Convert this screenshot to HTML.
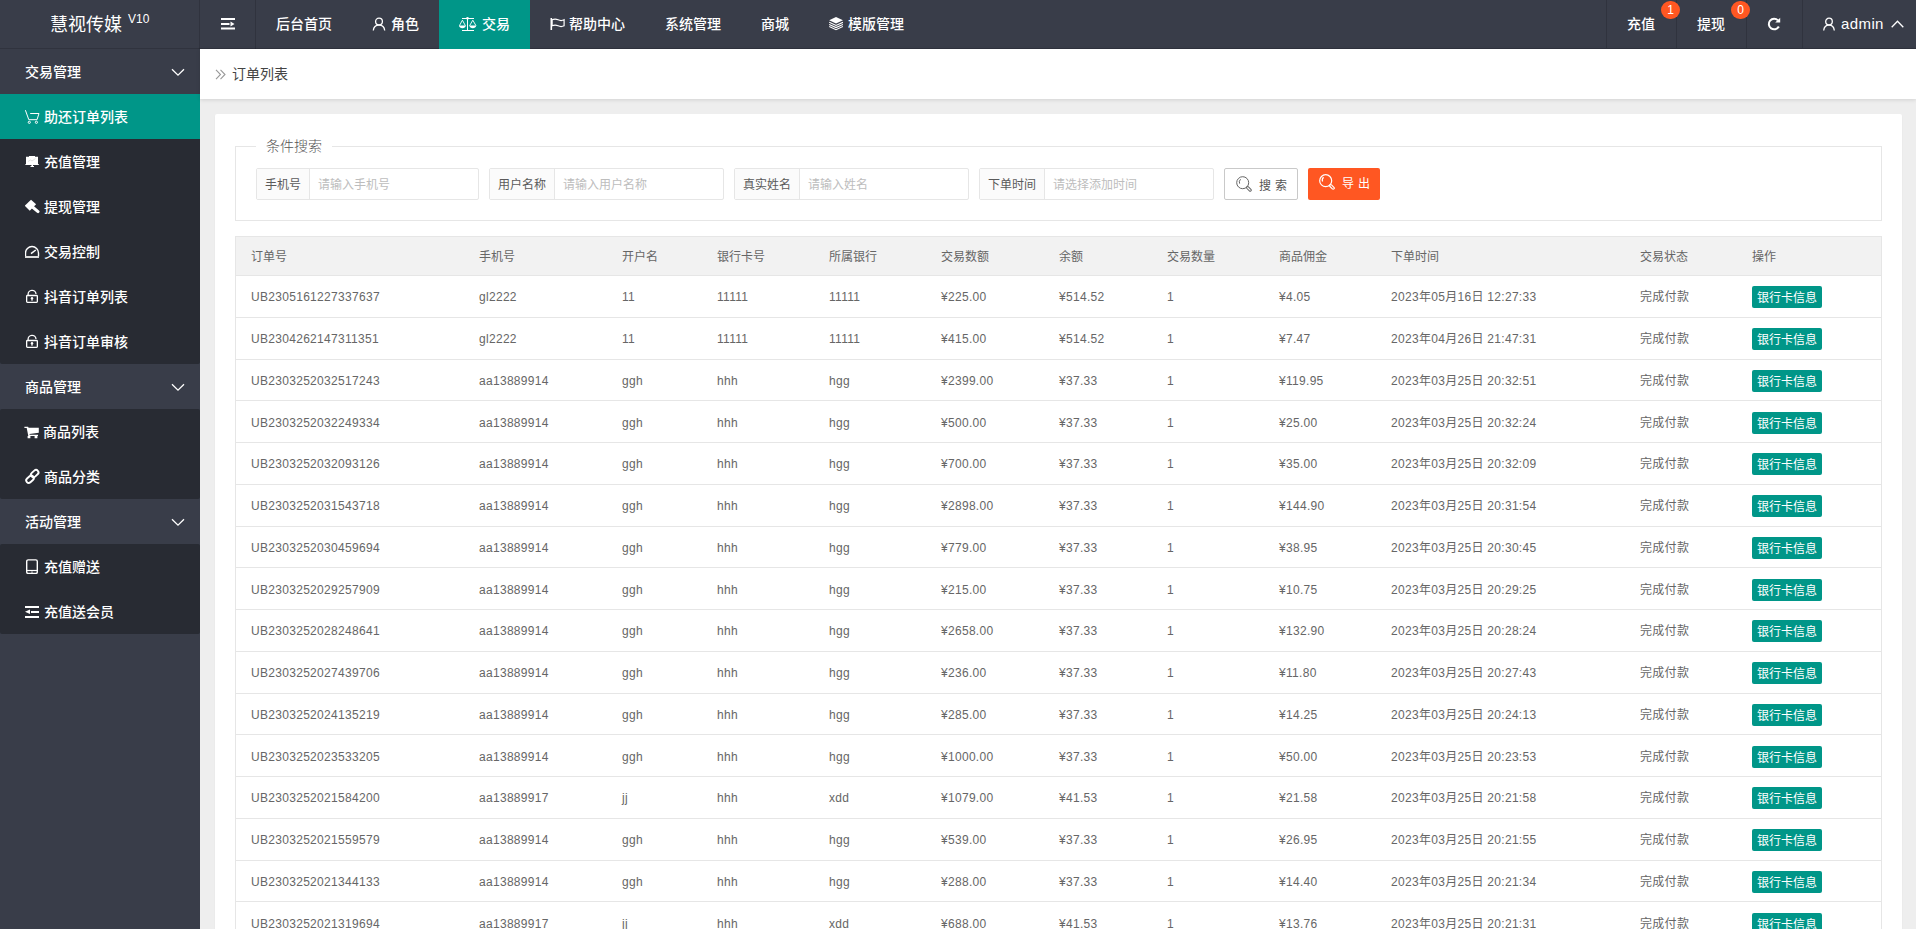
<!DOCTYPE html>
<html lang="zh-CN">
<head>
<meta charset="utf-8">
<title>订单列表</title>
<style>
*{box-sizing:border-box;margin:0;padding:0}
html,body{width:1916px;height:929px;overflow:hidden}
body{background:#eeeeee;font-family:"Liberation Sans","Noto Sans CJK SC",sans-serif;font-size:14px;color:#333;position:relative}
ul{list-style:none}
svg{display:block}
/* header */
.hd{position:absolute;left:0;top:0;width:1916px;height:49px;background:#393D49;color:#fff;font-weight:500}
.hd:after{content:"";position:absolute;left:0;top:48px;width:1916px;height:1px;background:rgba(0,0,0,.15)}
.logo{position:absolute;left:0;top:0;width:200px;height:49px;border-right:1px solid rgba(0,0,0,.15);line-height:50px;overflow:hidden;font-size:18px;font-weight:400;color:#fff;padding-left:50px;white-space:nowrap}
.logo sup{font-size:12px;position:relative;top:-1px;margin-left:1px;vertical-align:super;line-height:0}
.flex{position:absolute;left:200px;top:0;width:56px;height:49px;border-right:1px solid rgba(0,0,0,.15)}
.flex svg{position:absolute;left:21px;top:17px}
.nav{position:absolute;top:0;height:48px;display:flex;z-index:1}
.nav.l{left:256px}
.nav.r{right:0}
.nav li{position:relative;height:48px;line-height:48px;padding:0 20px;font-size:14px;color:#fff;white-space:nowrap;display:flex;align-items:center}
.nav li.on{background:#009688;height:49px;padding-bottom:1px}
.nav li svg{margin-right:5px;flex:none}
.nav.r li{border-left:1px solid rgba(0,0,0,.15)}
.badge{position:absolute;top:1px;right:-4px;min-width:19px;height:18px;line-height:18px;border-radius:9px;background:#FF5722;color:#fff;font-size:12px;text-align:center;z-index:2}
/* side */
.side{position:absolute;left:0;top:49px;width:200px;height:880px;background:#393D49;color:#fff;font-weight:500}
.side .g{height:45px;line-height:47px;overflow:hidden;padding-left:25px;position:relative;font-size:14px}
.side .g svg{position:absolute;right:15px;top:19px}
.side .sub{background:#282B33;border-radius:2px}
.side .it{height:45px;line-height:47px;overflow:hidden;padding-left:44px;position:relative;font-size:14px;white-space:nowrap}
.side .it svg{position:absolute;left:25px;top:15px}
.side .it.on{background:#009688}
/* body */
.crumb{position:absolute;left:200px;top:49px;width:1716px;height:50px;background:#fff;box-shadow:0 1px 4px rgba(0,0,0,.12);line-height:50px;padding-left:32px;font-size:14px;color:#444}
.crumb svg{position:absolute;left:15px;top:20px}
.card{position:absolute;left:215px;top:114px;width:1687px;height:900px;background:#fff;border-radius:2px;box-shadow:0 1px 2px 0 rgba(0,0,0,.05)}
.fs{position:absolute;left:20px;top:32px;width:1647px;height:75px;border:1px solid #e6e6e6}
.fs .lg{position:absolute;left:20px;top:-11px;padding:0 10px;background:#fff;font-size:14px;line-height:20px;color:#555;font-weight:300}
.grp{position:absolute;top:21px;height:32px;border:1px solid #e6e6e6;border-radius:2px;display:flex;font-size:12px;background:#fff}
.grp .lb{height:30px;line-height:32px;overflow:hidden;background:#FBFBFB;border-right:1px solid #e6e6e6;text-align:center;color:#5a5a5a}
.grp .ip{height:30px;line-height:32px;overflow:hidden;padding-left:8px;color:#bdbdbd;width:168px}
.btn{position:absolute;top:21px;height:32px;border-radius:2px;font-size:12px;white-space:pre}
.btn svg{position:absolute}
.btn span{position:absolute;line-height:20px;word-spacing:.7px}
.btn.s{border:1px solid #C9C9C9;background:#fff;color:#555}
.btn.e{background:#FF5722;color:#fff}
/* table */
.tbl{position:absolute;left:20px;top:122px;width:1647px;border:1px solid #e6e6e6;border-bottom:0;font-size:12px;color:#666;letter-spacing:.3px}
.tr{display:flex;height:41.75px;border-bottom:1px solid #e6e6e6}
.tr.th{height:39px;background:#f2f2f2;letter-spacing:0}
.td{padding-left:15px;padding-top:2px;line-height:20px;display:flex;align-items:center;white-space:nowrap;flex:none}
.tr.th .td{height:38px;padding-top:2px}
.xbtn{display:inline-block;height:22px;line-height:25px;overflow:hidden;padding:0 5px;background:#009688;color:#fff;border-radius:2px;font-size:12px;letter-spacing:0;position:relative;top:0}

</style>
</head>
<body>
<div class="hd">
  <div class="logo">慧视传媒 <sup>V10</sup></div>
  <div class="flex"><svg width="14" height="14" viewBox="0 0 14 14"><path fill="#fff" d="M0 1h14v2H0zM0 6h8.5v2H0zM0 10.5h14v2H0zM9.5 4.5l4 2.5-4 2.5z"/></svg></div>
  <ul class="nav l">
    <li>后台首页</li>
    <li><svg width="14" height="14" viewBox="0 0 14 14"><g fill="none" stroke="#fff" stroke-width="1.3"><circle cx="7" cy="4.5" r="3.4"/><path d="M1.3 13.5c.3-3.2 2.6-5.4 5.7-5.4s5.400 2.200 5.700 5.400"/></g></svg>角色</li>
    <li class="on"><svg width="18" height="14" viewBox="0 0 18 14"><g fill="none" stroke="#fff" stroke-width="1"><path d="M3 1.500h12M8.500 1.500v12M3 13.500h12"/><path d="M3.400 3.200L.4 8.700M3.400 3.200l3 5.500M13.800 3.200l-3.200 5.500M13.800 3.200l3.200 5.500" stroke-width=".9"/></g><circle cx="8.500" cy="1.300" r="1.300" fill="#fff"/><path fill="#fff" d="M0 8.500h6.800c-.2 1.800-1.600 2.700-3.400 2.700S.2 10.300 0 8.500zM10.400 8.500h6.800c-.2 1.800-1.600 2.700-3.400 2.700s-3.200-.9-3.400-2.700z"/></svg>交易</li>
    <li><svg width="15" height="14" viewBox="0 0 15 14" style="margin-right:4px"><g fill="none" stroke="#fff"><path stroke-width="1.600" d="M1.300 1v12"/><path stroke-width="1.200" d="M2.100 2.800c2-1 4-1 6 0s4 1 6 0v6c-2 1-4 1-6 0s-4-1-6 0z"/></g></svg>帮助中心</li>
    <li>系统管理</li>
    <li>商城</li>
    <li><svg width="14" height="14" viewBox="0 0 14 14"><path fill="#fff" d="M7 0L.2 3.300 7 6.500l7-3.200z"/><path fill="none" stroke="#fff" stroke-width="1.100" d="M.2 5.300L7 8.500l7-3.200M.2 7.400L7 10.600l7-3.200M.2 9.500L7 12.700l7-3.200"/></svg>模版管理</li>
  </ul>
  <ul class="nav r">
    <li style="width:70px">充值<span class="badge">1</span></li>
    <li style="width:70px">提现<span class="badge">0</span></li>
    <li style="width:56px"><svg width="14" height="14" viewBox="0 0 14 14"><path fill="none" stroke="#fff" stroke-width="2" d="M11.800 9.500A5.300 5.300 0 1 1 11 3.400"/><path fill="#fff" d="M8.200 5.600L13.200.8v4.800z"/></svg></li>
    <li style="width:114px"><svg width="12" height="14" viewBox="0 0 12 14" style="margin-right:6px"><g fill="none" stroke="#fff" stroke-width="1.300"><circle cx="6" cy="4.500" r="3.300"/><path d="M.7 13.500c.3-3.200 2.400-5.400 5.300-5.400s5 2.200 5.300 5.400"/></g></svg><span style="font-size:15px;letter-spacing:.4px">admin</span><svg width="13" height="8" viewBox="0 0 13 8" style="margin-left:7px;margin-right:0"><path fill="none" stroke="#fff" stroke-width="1.300" d="M.7 7.300L6.500 1.300l5.800 6"/></svg></li>
  </ul>
</div>
<div class="side">
  <div class="g">交易管理<svg width="14" height="9" viewBox="0 0 14 9"><path fill="none" stroke="#fff" stroke-width="1.300" d="M1 1.200l6 6 6-6"/></svg></div>
  <div class="sub">
    <div class="it on"><svg width="15" height="15" viewBox="0 0 15 15"><g fill="none" stroke="#fff" stroke-width="1"><path d="M.4 1.200l3.400 9.500H12l2-6.200H5.200"/><circle cx="4.300" cy="13.300" r="1.100"/><circle cx="11.400" cy="13.300" r="1.100"/></g></svg>助还订单列表</div>
    <div class="it"><svg width="15" height="15" viewBox="0 0 15 15"><path fill="#fff" d="M4 2h6v.8h3v7.400h1v.9H.2v-.9H1V2.800h3zM6.500 11.100h1.500v.9H9v1H5.500v-1h1z"/><path fill="none" stroke="#ccc" stroke-width=".6" d="M3 7.500l2.500-1.500 1.500 1 3.500-2.500"/></svg>充值管理</div>
    <div class="it"><svg width="15" height="15" viewBox="0 0 15 15"><path fill="#fff" d="M6 .8l5.100 4.500-6.350 6.500L-.2 6.700z"/><path stroke="#fff" stroke-width="3" stroke-linecap="round" d="M7.500 8l5.500 4.600"/></svg>提现管理</div>
    <div class="it"><svg width="15" height="15" viewBox="0 0 15 15"><path fill="none" stroke="#fff" stroke-width="1.400" d="M.5 12.500V9a6.500 6.500 0 0 1 13 0v3.500"/><path fill="#ddd" d="M0 12h14v2H0z"/><path stroke="#fff" stroke-width="1.500" d="M6 9.700L10.800 6"/></svg>交易控制</div>
    <div class="it"><svg width="15" height="15" viewBox="0 0 15 15"><g fill="none" stroke="#fff" stroke-width="1.300"><rect x="1.650" y="6.500" width="10.700" height="6.900" rx=".8"/><path d="M3.100 6.500V5.500a3.950 3.950 0 0 1 7.900-.5"/></g><circle cx="7" cy="9.300" r="1.200" fill="#fff"/><path stroke="#fff" stroke-width="1.200" d="M7 9.300v2.500"/></svg>抖音订单列表</div>
    <div class="it"><svg width="15" height="15" viewBox="0 0 15 15"><g fill="none" stroke="#fff" stroke-width="1.300"><rect x="1.650" y="6.500" width="10.700" height="6.900" rx=".8"/><path d="M3.100 6.500V5.500a3.950 3.950 0 0 1 7.900-.5"/></g><circle cx="7" cy="9.300" r="1.200" fill="#fff"/><path stroke="#fff" stroke-width="1.200" d="M7 9.300v2.500"/></svg>抖音订单审核</div>
  </div>
  <div class="g">商品管理<svg width="14" height="9" viewBox="0 0 14 9"><path fill="none" stroke="#fff" stroke-width="1.300" d="M1 1.200l6 6 6-6"/></svg></div>
  <div class="sub">
    <div class="it" style="padding-left:43px"><svg width="15" height="15" viewBox="0 0 15 15" style="overflow:visible"><path fill="#fff" d="M-.6 2.800h3.700l.5 1h10.200v5l-9.300 1.100.2.900h8.300v1.200H3.300L1.700 4H-.6z"/><path fill="#fff" d="M2.600 12h2.800v2.200H2.600zM9.600 12h2.800v2.200H9.600z"/></svg>商品列表</div>
    <div class="it"><svg width="15" height="15" viewBox="0 0 15 15" style="overflow:visible"><g fill="none" stroke="#fff" stroke-width="1.900"><rect x="-4.200" y="-2.500" width="8.400" height="5" rx="2.500" transform="translate(9.700 4.600) rotate(-42)"/><rect x="-4.200" y="-2.500" width="8.400" height="5" rx="2.500" transform="translate(5 10.300) rotate(-42)"/></g></svg>商品分类</div>
  </div>
  <div class="g">活动管理<svg width="14" height="9" viewBox="0 0 14 9"><path fill="none" stroke="#fff" stroke-width="1.300" d="M1 1.200l6 6 6-6"/></svg></div>
  <div class="sub">
    <div class="it"><svg width="15" height="15" viewBox="0 0 15 15"><rect x="1.700" y=".9" width="10.600" height="13.500" rx="1.500" fill="none" stroke="#fff" stroke-width="1.400"/><path fill="#fff" d="M1.700 10.900h10.600v1.200H1.700z"/><rect x="6.300" y="12.600" width="1.400" height="1" fill="#fff"/></svg>充值赠送</div>
    <div class="it"><svg width="15" height="15" viewBox="0 0 15 15"><path fill="#fff" d="M0 2h14v2H0zM6 7h8v2H6zM0 12h14v2H0zM0 7.800L5 5.500V10z"/></svg>充值送会员</div>
  </div>
</div>
<div class="crumb"><svg width="11" height="11" viewBox="0 0 11 11"><path fill="none" stroke="#999" stroke-width="1.100" d="M1 .8l4.500 4.700L1 10.200M5.500.8L10 5.500l-4.500 4.700"/></svg>订单列表</div>
<div class="card">
  <div class="fs">
    <div class="lg">条件搜索</div>
    <div class="grp" style="left:20px;width:223px"><div class="lb" style="width:53px">手机号</div><div class="ip">请输入手机号</div></div>
    <div class="grp" style="left:253px;width:235px"><div class="lb" style="width:65px">用户名称</div><div class="ip">请输入用户名称</div></div>
    <div class="grp" style="left:498px;width:235px"><div class="lb" style="width:65px">真实姓名</div><div class="ip">请输入姓名</div></div>
    <div class="grp" style="left:743px;width:235px"><div class="lb" style="width:65px">下单时间</div><div class="ip">请选择添加时间</div></div>
    <div class="btn s" style="left:988px;width:74px"><svg width="16" height="16" viewBox="0 0 16 16" style="left:11px;top:7px"><g fill="none" stroke="#666" stroke-width="1"><circle cx="6.700" cy="6.700" r="6"/><path d="M4.600 3.300a3.800 3.800 0 0 0-1 4.300"/><rect x="-1.100" y="0" width="2.200" height="5.600" rx="1.100" transform="translate(10.950 10.950) rotate(-45)"/></g></svg><span style="left:34px;top:7px">搜 索</span></div>
    <div class="btn e" style="left:1072px;width:72px"><svg width="16" height="16" viewBox="0 0 16 16" style="left:11px;top:6px"><g fill="none" stroke="#fff" stroke-width="1.200"><circle cx="6.700" cy="6.700" r="6"/><path d="M4.600 3.300a3.800 3.800 0 0 0-1 4.300"/><rect x="-1.100" y="0" width="2.200" height="5.600" rx="1.100" transform="translate(10.950 10.950) rotate(-45)"/></g></svg><span style="left:34px;top:6px">导 出</span></div>
  </div>
<div class="tbl">
<div class="tr th"><div class="td" style="width:228px">订单号</div><div class="td" style="width:143px">手机号</div><div class="td" style="width:95px">开户名</div><div class="td" style="width:112px">银行卡号</div><div class="td" style="width:112px">所属银行</div><div class="td" style="width:118px">交易数额</div><div class="td" style="width:108px">余额</div><div class="td" style="width:112px">交易数量</div><div class="td" style="width:112px">商品佣金</div><div class="td" style="width:249px">下单时间</div><div class="td" style="width:112px">交易状态</div><div class="td" style="width:144px">操作</div></div>
<div class="tr"><div class="td" style="width:228px">UB2305161227337637</div><div class="td" style="width:143px">gl2222</div><div class="td" style="width:95px">11</div><div class="td" style="width:112px">11111</div><div class="td" style="width:112px">11111</div><div class="td" style="width:118px">¥225.00</div><div class="td" style="width:108px">¥514.52</div><div class="td" style="width:112px">1</div><div class="td" style="width:112px">¥4.05</div><div class="td c" style="width:249px">2023年05月16日 12:27:33</div><div class="td c" style="width:112px">完成付款</div><div class="td" style="width:144px"><span class="xbtn">银行卡信息</span></div></div>
<div class="tr"><div class="td" style="width:228px">UB2304262147311351</div><div class="td" style="width:143px">gl2222</div><div class="td" style="width:95px">11</div><div class="td" style="width:112px">11111</div><div class="td" style="width:112px">11111</div><div class="td" style="width:118px">¥415.00</div><div class="td" style="width:108px">¥514.52</div><div class="td" style="width:112px">1</div><div class="td" style="width:112px">¥7.47</div><div class="td c" style="width:249px">2023年04月26日 21:47:31</div><div class="td c" style="width:112px">完成付款</div><div class="td" style="width:144px"><span class="xbtn">银行卡信息</span></div></div>
<div class="tr"><div class="td" style="width:228px">UB2303252032517243</div><div class="td" style="width:143px">aa13889914</div><div class="td" style="width:95px">ggh</div><div class="td" style="width:112px">hhh</div><div class="td" style="width:112px">hgg</div><div class="td" style="width:118px">¥2399.00</div><div class="td" style="width:108px">¥37.33</div><div class="td" style="width:112px">1</div><div class="td" style="width:112px">¥119.95</div><div class="td c" style="width:249px">2023年03月25日 20:32:51</div><div class="td c" style="width:112px">完成付款</div><div class="td" style="width:144px"><span class="xbtn">银行卡信息</span></div></div>
<div class="tr"><div class="td" style="width:228px">UB2303252032249334</div><div class="td" style="width:143px">aa13889914</div><div class="td" style="width:95px">ggh</div><div class="td" style="width:112px">hhh</div><div class="td" style="width:112px">hgg</div><div class="td" style="width:118px">¥500.00</div><div class="td" style="width:108px">¥37.33</div><div class="td" style="width:112px">1</div><div class="td" style="width:112px">¥25.00</div><div class="td c" style="width:249px">2023年03月25日 20:32:24</div><div class="td c" style="width:112px">完成付款</div><div class="td" style="width:144px"><span class="xbtn">银行卡信息</span></div></div>
<div class="tr"><div class="td" style="width:228px">UB2303252032093126</div><div class="td" style="width:143px">aa13889914</div><div class="td" style="width:95px">ggh</div><div class="td" style="width:112px">hhh</div><div class="td" style="width:112px">hgg</div><div class="td" style="width:118px">¥700.00</div><div class="td" style="width:108px">¥37.33</div><div class="td" style="width:112px">1</div><div class="td" style="width:112px">¥35.00</div><div class="td c" style="width:249px">2023年03月25日 20:32:09</div><div class="td c" style="width:112px">完成付款</div><div class="td" style="width:144px"><span class="xbtn">银行卡信息</span></div></div>
<div class="tr"><div class="td" style="width:228px">UB2303252031543718</div><div class="td" style="width:143px">aa13889914</div><div class="td" style="width:95px">ggh</div><div class="td" style="width:112px">hhh</div><div class="td" style="width:112px">hgg</div><div class="td" style="width:118px">¥2898.00</div><div class="td" style="width:108px">¥37.33</div><div class="td" style="width:112px">1</div><div class="td" style="width:112px">¥144.90</div><div class="td c" style="width:249px">2023年03月25日 20:31:54</div><div class="td c" style="width:112px">完成付款</div><div class="td" style="width:144px"><span class="xbtn">银行卡信息</span></div></div>
<div class="tr"><div class="td" style="width:228px">UB2303252030459694</div><div class="td" style="width:143px">aa13889914</div><div class="td" style="width:95px">ggh</div><div class="td" style="width:112px">hhh</div><div class="td" style="width:112px">hgg</div><div class="td" style="width:118px">¥779.00</div><div class="td" style="width:108px">¥37.33</div><div class="td" style="width:112px">1</div><div class="td" style="width:112px">¥38.95</div><div class="td c" style="width:249px">2023年03月25日 20:30:45</div><div class="td c" style="width:112px">完成付款</div><div class="td" style="width:144px"><span class="xbtn">银行卡信息</span></div></div>
<div class="tr"><div class="td" style="width:228px">UB2303252029257909</div><div class="td" style="width:143px">aa13889914</div><div class="td" style="width:95px">ggh</div><div class="td" style="width:112px">hhh</div><div class="td" style="width:112px">hgg</div><div class="td" style="width:118px">¥215.00</div><div class="td" style="width:108px">¥37.33</div><div class="td" style="width:112px">1</div><div class="td" style="width:112px">¥10.75</div><div class="td c" style="width:249px">2023年03月25日 20:29:25</div><div class="td c" style="width:112px">完成付款</div><div class="td" style="width:144px"><span class="xbtn">银行卡信息</span></div></div>
<div class="tr"><div class="td" style="width:228px">UB2303252028248641</div><div class="td" style="width:143px">aa13889914</div><div class="td" style="width:95px">ggh</div><div class="td" style="width:112px">hhh</div><div class="td" style="width:112px">hgg</div><div class="td" style="width:118px">¥2658.00</div><div class="td" style="width:108px">¥37.33</div><div class="td" style="width:112px">1</div><div class="td" style="width:112px">¥132.90</div><div class="td c" style="width:249px">2023年03月25日 20:28:24</div><div class="td c" style="width:112px">完成付款</div><div class="td" style="width:144px"><span class="xbtn">银行卡信息</span></div></div>
<div class="tr"><div class="td" style="width:228px">UB2303252027439706</div><div class="td" style="width:143px">aa13889914</div><div class="td" style="width:95px">ggh</div><div class="td" style="width:112px">hhh</div><div class="td" style="width:112px">hgg</div><div class="td" style="width:118px">¥236.00</div><div class="td" style="width:108px">¥37.33</div><div class="td" style="width:112px">1</div><div class="td" style="width:112px">¥11.80</div><div class="td c" style="width:249px">2023年03月25日 20:27:43</div><div class="td c" style="width:112px">完成付款</div><div class="td" style="width:144px"><span class="xbtn">银行卡信息</span></div></div>
<div class="tr"><div class="td" style="width:228px">UB2303252024135219</div><div class="td" style="width:143px">aa13889914</div><div class="td" style="width:95px">ggh</div><div class="td" style="width:112px">hhh</div><div class="td" style="width:112px">hgg</div><div class="td" style="width:118px">¥285.00</div><div class="td" style="width:108px">¥37.33</div><div class="td" style="width:112px">1</div><div class="td" style="width:112px">¥14.25</div><div class="td c" style="width:249px">2023年03月25日 20:24:13</div><div class="td c" style="width:112px">完成付款</div><div class="td" style="width:144px"><span class="xbtn">银行卡信息</span></div></div>
<div class="tr"><div class="td" style="width:228px">UB2303252023533205</div><div class="td" style="width:143px">aa13889914</div><div class="td" style="width:95px">ggh</div><div class="td" style="width:112px">hhh</div><div class="td" style="width:112px">hgg</div><div class="td" style="width:118px">¥1000.00</div><div class="td" style="width:108px">¥37.33</div><div class="td" style="width:112px">1</div><div class="td" style="width:112px">¥50.00</div><div class="td c" style="width:249px">2023年03月25日 20:23:53</div><div class="td c" style="width:112px">完成付款</div><div class="td" style="width:144px"><span class="xbtn">银行卡信息</span></div></div>
<div class="tr"><div class="td" style="width:228px">UB2303252021584200</div><div class="td" style="width:143px">aa13889917</div><div class="td" style="width:95px">jj</div><div class="td" style="width:112px">hhh</div><div class="td" style="width:112px">xdd</div><div class="td" style="width:118px">¥1079.00</div><div class="td" style="width:108px">¥41.53</div><div class="td" style="width:112px">1</div><div class="td" style="width:112px">¥21.58</div><div class="td c" style="width:249px">2023年03月25日 20:21:58</div><div class="td c" style="width:112px">完成付款</div><div class="td" style="width:144px"><span class="xbtn">银行卡信息</span></div></div>
<div class="tr"><div class="td" style="width:228px">UB2303252021559579</div><div class="td" style="width:143px">aa13889914</div><div class="td" style="width:95px">ggh</div><div class="td" style="width:112px">hhh</div><div class="td" style="width:112px">hgg</div><div class="td" style="width:118px">¥539.00</div><div class="td" style="width:108px">¥37.33</div><div class="td" style="width:112px">1</div><div class="td" style="width:112px">¥26.95</div><div class="td c" style="width:249px">2023年03月25日 20:21:55</div><div class="td c" style="width:112px">完成付款</div><div class="td" style="width:144px"><span class="xbtn">银行卡信息</span></div></div>
<div class="tr"><div class="td" style="width:228px">UB2303252021344133</div><div class="td" style="width:143px">aa13889914</div><div class="td" style="width:95px">ggh</div><div class="td" style="width:112px">hhh</div><div class="td" style="width:112px">hgg</div><div class="td" style="width:118px">¥288.00</div><div class="td" style="width:108px">¥37.33</div><div class="td" style="width:112px">1</div><div class="td" style="width:112px">¥14.40</div><div class="td c" style="width:249px">2023年03月25日 20:21:34</div><div class="td c" style="width:112px">完成付款</div><div class="td" style="width:144px"><span class="xbtn">银行卡信息</span></div></div>
<div class="tr"><div class="td" style="width:228px">UB2303252021319694</div><div class="td" style="width:143px">aa13889917</div><div class="td" style="width:95px">jj</div><div class="td" style="width:112px">hhh</div><div class="td" style="width:112px">xdd</div><div class="td" style="width:118px">¥688.00</div><div class="td" style="width:108px">¥41.53</div><div class="td" style="width:112px">1</div><div class="td" style="width:112px">¥13.76</div><div class="td c" style="width:249px">2023年03月25日 20:21:31</div><div class="td c" style="width:112px">完成付款</div><div class="td" style="width:144px"><span class="xbtn">银行卡信息</span></div></div>
</div>
</div>
</div>
</body>
</html>
